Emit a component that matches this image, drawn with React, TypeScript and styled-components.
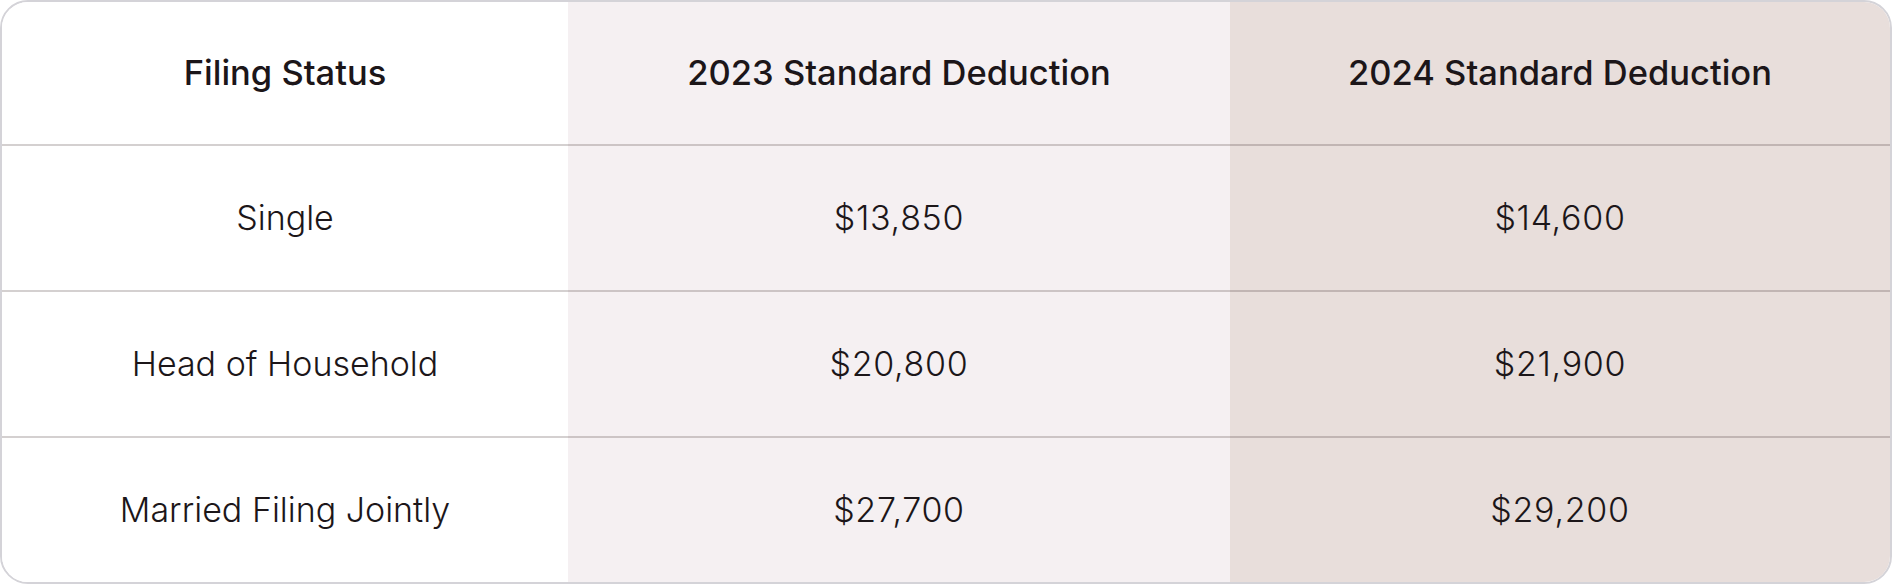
import React from "react";
import styled, { createGlobalStyle } from "styled-components";

const Global = createGlobalStyle`
  html, body { margin: 0; padding: 0; background: #ffffff; }
  body { font-family: Inter, "Noto Sans", sans-serif; }
`;

const Card = styled.div`
  box-sizing: border-box;
  width: 1892px;
  height: 584px;
  border: 2px solid #d4d3d8;
  border-radius: 28px;
  overflow: hidden;
  display: grid;
  grid-template-columns: 566px 662px 1fr;
  grid-template-rows: 144px 146px 146px 144px;
`;

const bg = ["#ffffff", "#f5f0f2", "#e8dedb"];

const Cell = styled.div<{ $col: number; $head?: boolean; $last?: boolean; $num?: boolean }>`
  display: flex;
  align-items: center;
  justify-content: center;
  padding-bottom: 2px;
  background: ${(p) => bg[p.$col]};
  border-bottom: ${(p) => (p.$last ? "none" : "2px solid rgba(40, 20, 20, 0.2)")};
  color: #1c1619;
  font-size: ${(p) => (p.$head ? "34.5px" : "34px")};
  font-weight: ${(p) => (p.$head ? 500 : 300)};
  letter-spacing: ${(p) => (p.$num ? "0.7px" : "0")};
  white-space: nowrap;
`;

const rows = [
  ["Single", "$13,850", "$14,600"],
  ["Head of Household", "$20,800", "$21,900"],
  ["Married Filing Jointly", "$27,700", "$29,200"],
];

const head = ["Filing Status", "2023 Standard Deduction", "2024 Standard Deduction"];

export default function App() {
  return (
    <>
      <Global />
      <Card>
        {head.map((h, i) => (
          <Cell key={h} $col={i} $head>
            {h}
          </Cell>
        ))}
        {rows.map((r, ri) =>
          r.map((c, ci) => (
            <Cell key={ri + "-" + ci} $col={ci} $num={ci > 0} $last={ri === rows.length - 1}>
              {c}
            </Cell>
          ))
        )}
      </Card>
    </>
  );
}
